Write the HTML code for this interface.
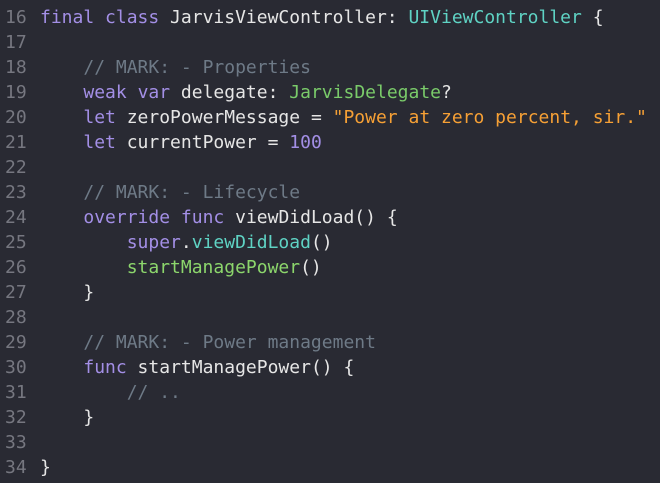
<!DOCTYPE html>
<html><head><style>
html,body{margin:0;padding:0;background:#292a33;width:660px;height:483px;overflow:hidden}
pre{margin:0;position:absolute;top:5px;left:0;font-family:"DejaVu Sans Mono","Liberation Mono",monospace;font-size:18px;line-height:25px;color:#e6e6e6}
.n{color:#767780;display:inline-block;width:40px;padding-left:5px;box-sizing:border-box}
.k{color:#a38fe6}.c{color:#6e7a87}.t{color:#7acb6a}.u{color:#5fd3c4}.s{color:#f6a035}.f{color:#8cd66c}
</style></head><body><pre>
<span class="n">16</span><span class="k">final</span> <span class="k">class</span> JarvisViewController: <span class="u">UIViewController</span> {
<span class="n">17</span>
<span class="n">18</span>    <span class="c">// MARK: - Properties</span>
<span class="n">19</span>    <span class="k">weak</span> <span class="k">var</span> delegate: <span class="t">JarvisDelegate</span>?
<span class="n">20</span>    <span class="k">let</span> zeroPowerMessage = <span class="s">"Power at zero percent, sir."</span>
<span class="n">21</span>    <span class="k">let</span> currentPower = <span class="k">100</span>
<span class="n">22</span>
<span class="n">23</span>    <span class="c">// MARK: - Lifecycle</span>
<span class="n">24</span>    <span class="k">override</span> <span class="k">func</span> viewDidLoad() {
<span class="n">25</span>        <span class="k">super</span>.<span class="u">viewDidLoad</span>()
<span class="n">26</span>        <span class="f">startManagePower</span>()
<span class="n">27</span>    }
<span class="n">28</span>
<span class="n">29</span>    <span class="c">// MARK: - Power management</span>
<span class="n">30</span>    <span class="k">func</span> startManagePower() {
<span class="n">31</span>        <span class="c">// ..</span>
<span class="n">32</span>    }
<span class="n">33</span>
<span class="n">34</span>}
</pre></body></html>
